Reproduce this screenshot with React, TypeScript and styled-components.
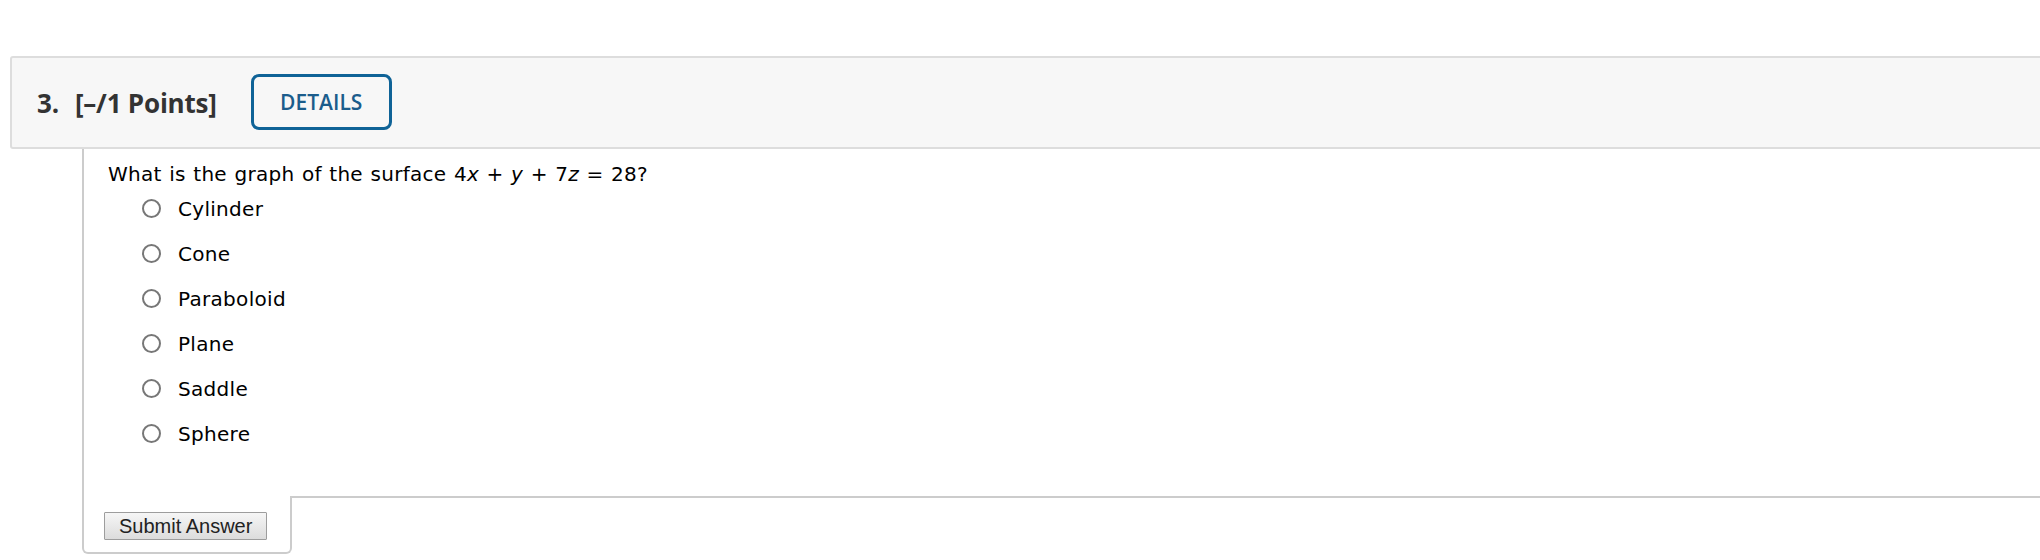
import styled, { createGlobalStyle } from 'styled-components'

const GlobalStyle = createGlobalStyle`
  html, body {
    margin: 0;
    padding: 0;
    background: #fff;
    overflow: hidden;
  }
`

const options = ['Cylinder', 'Cone', 'Paraboloid', 'Plane', 'Saddle', 'Sphere']

export default function App() {
  return (
    <Page>
      <GlobalStyle />
      <QuestionHeader>
        <Title>
          <Number>3.</Number>
          <span>[–/1 Points]</span>
        </Title>
        <DetailsButton>DETAILS</DetailsButton>
      </QuestionHeader>
      <Panel>
        <Body>
          <Question>
            What is the graph of the surface 4<Var>x</Var> + <Var>y</Var> + 7<Var>z</Var> = 28?
          </Question>
          <OptionList>
            {options.map((label) => (
              <OptionRow key={label}>
                <Radio />
                <OptionLabel>{label}</OptionLabel>
              </OptionRow>
            ))}
          </OptionList>
        </Body>
        <Footer>
          <SubmitCell>
            <SubmitButton>Submit Answer</SubmitButton>
          </SubmitCell>
          <FooterRest />
        </Footer>
      </Panel>
    </Page>
  )
}

const Page = styled.div`
  width: 2090px;
  padding: 56px 0 0 10px;
  box-sizing: border-box;
`

const QuestionHeader = styled.div`
  display: flex;
  align-items: center;
  height: 93px;
  box-sizing: border-box;
  padding-left: 25px;
  background: #f7f7f7;
  border: 2px solid #dddddd;
  border-radius: 3px;
`

const Title = styled.div`
  font-family: 'Open Sans', sans-serif;
  font-weight: 700;
  font-size: 26px;
  letter-spacing: -0.2px;
  color: #333333;
  margin-right: 34px;
  white-space: nowrap;
`

const Number = styled.span`
  margin-right: 16px;
`

const DetailsButton = styled.button`
  width: 141px;
  height: 56px;
  box-sizing: border-box;
  margin-top: -1px;
  background: transparent;
  border: 3.5px solid #0f6397;
  border-radius: 8px;
  font-family: 'Open Sans', sans-serif;
  font-weight: 600;
  font-size: 21px;
  color: #1b5d8c;
  padding: 0;
`

const Panel = styled.div`
  margin-left: 72px;
`

const Body = styled.div`
  border-left: 2px solid #cccccc;
  padding: 13px 0 40px 24px;
  font-family: Verdana, 'DejaVu Sans', sans-serif;
  font-size: 20px;
  line-height: 24px;
  letter-spacing: 0.3px;
  color: #000;
`

const Question = styled.div`
  word-spacing: 0.8px;
`

const Var = styled.i``

const OptionList = styled.div`
  display: flex;
  flex-direction: column;
  padding-left: 34px;
`

const OptionRow = styled.div`
  display: flex;
  align-items: center;
  height: 45px;
`

const Radio = styled.span`
  width: 19px;
  height: 19px;
  box-sizing: border-box;
  border: 2px solid #777777;
  border-radius: 50%;
  background: #fff;
  margin-right: 17px;
  flex-shrink: 0;
`

const OptionLabel = styled.span``

const Footer = styled.div`
  display: flex;
  align-items: flex-start;
`

const SubmitCell = styled.div`
  width: 210px;
  box-sizing: border-box;
  padding: 16px 0 12px 20px;
  border: 2px solid #cccccc;
  border-top: none;
  border-radius: 0 0 6px 6px;
`

const FooterRest = styled.div`
  flex: 1;
  border-top: 2px solid #cccccc;
`

const SubmitButton = styled.button`
  height: 28px;
  box-sizing: border-box;
  padding: 0 14px;
  border: 1px solid #9d9d9d;
  border-radius: 1px;
  background: linear-gradient(#f6f6f6, #dcdcdc);
  font-family: 'Liberation Sans', Arial, sans-serif;
  font-size: 20px;
  line-height: 26px;
  color: #222;
`
